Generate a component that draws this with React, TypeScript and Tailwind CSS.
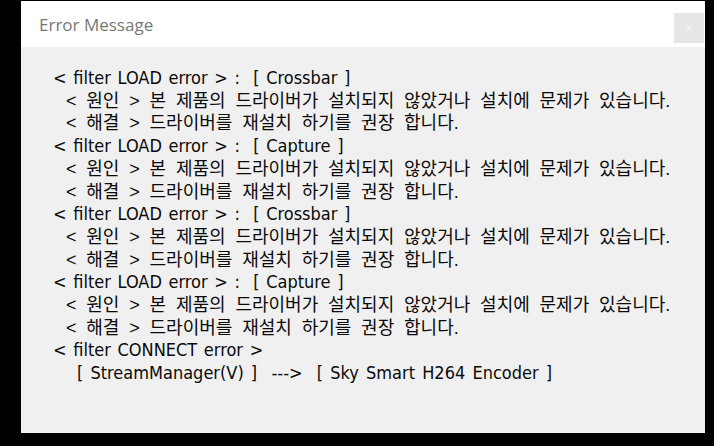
import React from 'react';

const cause = '< 원인 > 본 제품의 드라이버가 설치되지 않았거나 설치에 문제가 있습니다.';
const fix = '< 해결 > 드라이버를 재설치 하기를 권장 합니다.';

const filters = ['Crossbar', 'Capture', 'Crossbar', 'Capture'];

export default function App() {
  return (
    <div className="w-[714px] h-[446px] bg-black pl-[21px] pt-[1px]">
      <div className="w-[684px] h-[432px] flex flex-col">
        {/* Title bar */}
        <div className="h-[46px] bg-white flex items-start justify-between">
          <div className="pl-[18px] pt-[13px] text-[17px] leading-[22px] text-[#777777] font-['Open_Sans','Noto_Sans',sans-serif]">
            Error Message
          </div>
          <div className="mt-[12px] mr-[1px] w-[30px] h-[30px] bg-[#e6e6e6] flex items-center justify-center text-[13px] text-[#f8f8f8]">
            ×
          </div>
        </div>

        {/* Body */}
        <div className="flex-1 bg-[#f0f0f0] pt-[20px] pl-[32px] leading-[22.7px] text-[#0a0a0a] whitespace-pre">
          {filters.map((f, i) => (
            <div key={i}>
              <div className="text-[18px] [word-spacing:1.5px] font-['DejaVu_Sans_Condensed',sans-serif]">
                {`< filter LOAD error > :  [ ${f} ]`}
              </div>
              <div className="pl-[13px] text-[18px] [word-spacing:4.8px] font-['Liberation_Sans','Noto_Sans_CJK_KR',sans-serif]">
                {cause}
              </div>
              <div className="pl-[13px] text-[18px] [word-spacing:4.8px] font-['Liberation_Sans','Noto_Sans_CJK_KR',sans-serif]">
                {fix}
              </div>
            </div>
          ))}
          <div className="text-[18px] [word-spacing:1.5px] font-['DejaVu_Sans_Condensed',sans-serif]">
            {'< filter CONNECT error >'}
          </div>
          <div className="pl-[24px] text-[18px] [word-spacing:2px] font-['DejaVu_Sans_Condensed',sans-serif]">
            {'[ StreamManager(V) ]  --->  [ Sky Smart H264 Encoder ]'}
          </div>
        </div>
      </div>
    </div>
  );
}
